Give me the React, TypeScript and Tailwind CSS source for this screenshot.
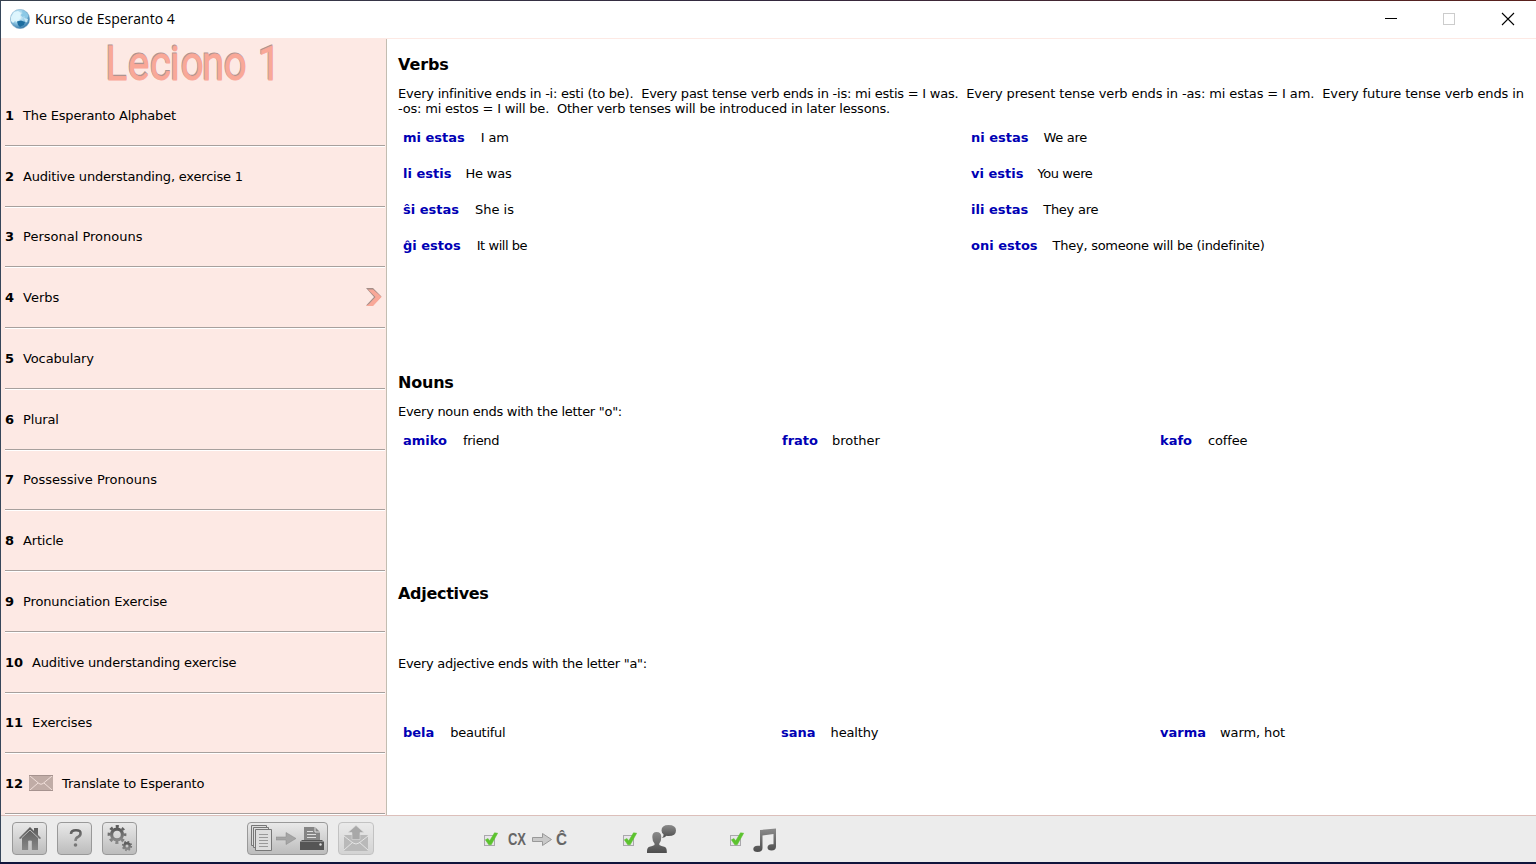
import React from "react";

type Lesson = { n: number; label: string; h: string; track?: string; active?: boolean; mail?: boolean };

const lessons: Lesson[] = [
  { n: 1, label: "The Esperanto Alphabet", h: "h-[61px]", track: "tracking-[-0.17px]" },
  { n: 2, label: "Auditive understanding, exercise 1", h: "h-[61px]", track: "tracking-[-0.19px]" },
  { n: 3, label: "Personal Pronouns", h: "h-[60px]" },
  { n: 4, label: "Verbs", h: "h-[61px]", active: true },
  { n: 5, label: "Vocabulary", h: "h-[61px]", track: "tracking-[-0.13px]" },
  { n: 6, label: "Plural", h: "h-[61px]", track: "tracking-[-0.15px]" },
  { n: 7, label: "Possessive Pronouns", h: "h-[60px]" },
  { n: 8, label: "Article", h: "h-[61px]", track: "tracking-[-0.2px]" },
  { n: 9, label: "Pronunciation Exercise", h: "h-[61px]", track: "tracking-[-0.14px]" },
  { n: 10, label: "Auditive understanding exercise", h: "h-[61px]", track: "tracking-[-0.18px]" },
  { n: 11, label: "Exercises", h: "h-[60px]", track: "tracking-[-0.1px]" },
  { n: 12, label: "Translate to Esperanto", h: "h-[61px]", track: "tracking-[-0.18px]", mail: true },
];

type Pair = [string, string, string?, string?];

const verbs: Pair[] = [
  ["mi estas", "I am", "gap-[16px]", "tracking-[-0.2px]"],
  ["ni estas", "We are", "gap-[15px]", "tracking-[-0.3px]"],
  ["li estis", "He was", "gap-[14px]", "tracking-[-0.2px]"],
  ["vi estis", "You were", "gap-[14px]", "tracking-[-0.4px]"],
  ["ŝi estas", "She is", "gap-[16px]"],
  ["ili estas", "They are", "gap-[15px]", "tracking-[-0.25px]"],
  ["ĝi estos", "It will be", "gap-[16px]", "tracking-[-0.45px]"],
  ["oni estos", "They, someone will be (indefinite)", "gap-[15px]", "tracking-[-0.27px]"],
];
const nouns: Pair[] = [
  ["amiko", "friend", "gap-[16px]", "tracking-[-0.3px]"],
  ["frato", "brother", "gap-[14px]"],
  ["kafo", "coffee", "gap-[16px]", "tracking-[-0.15px]"],
];
const adjectives: Pair[] = [
  ["bela", "beautiful", "gap-[16px]", "tracking-[-0.3px]"],
  ["sana", "healthy", "gap-[15px]", "tracking-[-0.15px]"],
  ["varma", "warm, hot", "gap-[14px]", "tracking-[-0.1px]"],
];

function Word({ pair }: { pair: Pair }) {
  return (
    <div className={`flex whitespace-nowrap ${pair[2] ?? ""}`}>
      <b className="text-[#0000b4]">{pair[0]}</b>
      <span className={pair[3]}>{pair[1]}</span>
    </div>
  );
}

function Globe() {
  return (
    <svg width="20" height="20" viewBox="0 0 20 20" className="ml-[9px]">
      <defs>
        <radialGradient id="globe" cx=".4" cy=".35" r=".7">
          <stop offset="0" stopColor="#f2fbff" /><stop offset=".5" stopColor="#9bd0ea" /><stop offset="1" stopColor="#256a9e" />
        </radialGradient>
      </defs>
      <circle cx="10" cy="10" r="9.700" fill="url(#globe)" stroke="#86afc8" strokeWidth=".5" />
      <path d="M1 8 4 3l4-1 3 2-1 3 1 2-4 4-2-1-2 2-2-2z" fill="#def5fd" opacity=".95" />
      <path d="M12 1.500q5 1 6.500 5.500l-2 3-2-3-2 1-2-2 2-1.500z" fill="#8cc9e6" />
      <path d="M7 12.500l4-1 4 1.500-1 3-4 2-2-2z" fill="#1d6d9f" />
      <path d="M14 9l4 1-1 3.500-2-1z" fill="#c8e9f6" />
    </svg>
  );
}

function Check() {
  return (
    <svg width="16" height="15" viewBox="0 0 16 15">
      <rect x="1.500" y="3.500" width="10" height="10" fill="#e8e5ea" stroke="#aaa8ac" />
      <path d="M2.300 7.800 5 6.500 6.700 8.800 11.500 .8l3.200 .4L8.200 12.800H5.800z" fill="#5cc32f" stroke="#5cc32f" strokeWidth=".5" />
    </svg>
  );
}

function Gear() {
  return (
    <svg width="26" height="28" viewBox="0 0 26 28">
      <g fill="none" stroke="url(#ink)">
        <circle cx="10" cy="10.500" r="5.400" strokeWidth="3.200" />
        <circle cx="10" cy="10.500" r="8" strokeWidth="2.800" strokeDasharray="3.100 3.180" strokeDashoffset="1.500" />
        <circle cx="20" cy="22" r="2.700" strokeWidth="2.400" />
        <circle cx="20" cy="22" r="4.300" strokeWidth="1.700" strokeDasharray="1.700 1.677" />
      </g>
    </svg>
  );
}

const buttonClass = "-mt-[2px] flex h-[33px] items-center justify-center rounded-[4px] border border-[#999] bg-linear-to-b from-[#e9e9e9] to-[#bcbcbc]";

const titleScale = 0.84;
const titleStops = [104, 126.4, 148.4, 168.5, 179.3, 200.4, 222.3, 245, 256.5];
const titleX = (shift: number) => titleStops.map((x) => (x + shift) / titleScale).join(" ");

export default function App() {
  return (
    <div className="flex h-[864px] w-[1536px] flex-col overflow-hidden bg-white font-['DejaVu_Sans',sans-serif] text-[13px] leading-[15px] text-black">
      <svg width="0" height="0" className="absolute">
        <defs>
          <linearGradient id="ink" x1="0" y1="0" x2="0" y2="1"><stop stopColor="#5b5b5b" /><stop offset="1" stopColor="#888" /></linearGradient>
          <linearGradient id="inkLight" x1="0" y1="0" x2="0" y2="1"><stop stopColor="#8b8b8b" /><stop offset="1" stopColor="#4d4d4d" /></linearGradient>
        </defs>
      </svg>
      <div className="h-px shrink-0 bg-linear-to-r from-[#38414e] via-[#33283e] to-[#5a201c]" />
      <div className="flex min-h-0 flex-1 flex-col border-l border-[#36465a]">
        <header className="flex h-[38px] shrink-0 items-center border-b border-[#fde9e4] pb-px">
          <Globe />
          <span className="ml-[5px] font-['Open_Sans',sans-serif] text-[14px] leading-[20px] whitespace-nowrap">Kurso de Esperanto 4</span>
          <svg className="ml-auto" width="152" height="20" viewBox="0 0 152 20" fill="none">
            <path d="M1 9.500h12" stroke="#000" />
            <rect x="59.500" y="4.500" width="11" height="11" stroke="#ccc" />
            <path d="m118 4 12 12m0-12-12 12" stroke="#000" strokeWidth="1.100" />
          </svg>
        </header>

        <div className="flex h-[776px] shrink-0">
          <aside className="flex w-[386px] shrink-0 flex-col border-r border-[#c3bdb1] bg-[#fde9e4]">
            <div className="h-[47px] shrink-0">
              <svg className="overflow-visible" width="384" height="47" viewBox="0 0 384 47">
                <g transform="translate(0 40) scale(.84 1)" fontFamily="Roboto,'Liberation Sans',sans-serif" fontSize="48">
                  <text x={titleX(0)} y="-.5" fill="#ae9390" stroke="#ae9390" strokeWidth="1.200">Leciono 1</text>
                  <text x={titleX(0.5)} y=".5" fill="#f9a898" stroke="#f9a898" strokeWidth=".8">Leciono 1</text>
                </g>
              </svg>
            </div>
            {lessons.map((l) => (
              <div key={l.n} className={`${l.h} mr-px ml-[4px] flex shrink-0 flex-col`}>
                <div className={`flex flex-1 items-center whitespace-nowrap ${l.h === "h-[60px]" ? "pb-px" : ""}`}>
                  <b>{l.n}</b>
                  {l.mail && (
                    <svg className="-mt-[2px] ml-[6px]" width="24" height="16" viewBox="0 0 24 16">
                      <rect width="24" height="16" rx="1" fill="#c0aca6" />
                      <path d="M1 1l9 7.500q2 1.600 4 0L23 1M1 15l8-7m14 7-8-7" fill="none" stroke="#f1dfda" />
                      <path d="M0 .5h24M0 15.500h24" stroke="#a6938f" />
                    </svg>
                  )}
                  <span className={`ml-[9px] ${l.track ?? ""}`}>{l.label}</span>
                  {l.active && (
                    <svg className="-mt-[2px] mr-[3px] ml-auto" width="16" height="18" viewBox="0 0 16 18">
                      <path d="M0 0h7l8.500 8.500L7 17.500H0L8 9z" fill="#a58e88" />
                      <path d="M2 1.500h5l8.500 7.500L7 18H0l3-2 6.500-7z" fill="#f9a898" />
                    </svg>
                  )}
                </div>
                <div className="h-px bg-[#a7a09d]" />
                <div className="h-px bg-white" />
              </div>
            ))}
          </aside>

          <main className="flex min-w-0 flex-1 flex-col pl-[11px]">
            <h1 className="mt-[16px] text-[16px] leading-[20px] font-bold tracking-[-0.1px]">Verbs</h1>
            <p className="mt-[11px] whitespace-pre">
              <span className="tracking-[-0.23px]">{"Every infinitive ends in -i: esti (to be).  Every past tense verb ends in -is: mi estis = I was.  "}</span>
              <span className="tracking-[-0.12px]">{"Every present tense verb ends in -as: mi estas = I am.  Every future tense verb ends in\n"}</span>
              <span className="tracking-[-0.2px]">{"-os: mi estos = I will be.  Other verb tenses will be introduced in later lessons."}</span>
            </p>
            <div className="mt-[14px] ml-[5px] grid grid-cols-[568px_1fr] gap-y-[21px]">
              {verbs.map((v) => <Word key={v[0]} pair={v} />)}
            </div>
            <h2 className="mt-[120px] text-[16px] leading-[20px] font-bold tracking-[-0.2px]">Nouns</h2>
            <p className="mt-[11px] tracking-[-0.28px]">Every noun ends with the letter "o":</p>
            <div className="mt-[14px] ml-[5px] grid grid-cols-[379px_378px_1fr]">
              {nouns.map((v) => <Word key={v[0]} pair={v} />)}
            </div>
            <h2 className="mt-[136px] text-[16px] leading-[20px] font-bold tracking-[-0.3px]">Adjectives</h2>
            <p className="mt-[52px] tracking-[-0.29px]">Every adjective ends with the letter "a":</p>
            <div className="mt-[54px] ml-[5px] grid grid-cols-[378px_379px_1fr]">
              {adjectives.map((v) => <Word key={v[0]} pair={v} />)}
            </div>
          </main>
        </div>

        <footer className="flex h-[47px] shrink-0 items-center border-t border-[#dcbfba] bg-[#ececec] pl-[11px]">
          <div className={`${buttonClass} w-[35px]`}>
            <svg width="22" height="24" viewBox="0 0 22 24">
              <path d="M0 12 11 1l4 4V2h4v7l3 3-1 1-2-1v12h-6v-9H9v9H3V12l-2 1z" fill="url(#ink)" />
              <path d="M2.500 12 11 4l8.500 8M9.500 24v-9h3v9" fill="none" stroke="#bbb" />
            </svg>
          </div>
          <div className={`${buttonClass} ml-[10px] w-[35px]`}>
            <svg className="-mt-px ml-[2px]" width="16" height="20" viewBox="0 0 16 20" fill="none">
              <path d="M3 6q0-3.800 5-3.800t4.500 3.600q0 2-2.500 3.200-2.500 1-2.500 4" stroke="url(#ink)" strokeWidth="2.600" /><circle cx="7.500" cy="17" r="1.800" fill="#777" />
            </svg>
          </div>
          <div className={`${buttonClass} ml-[10px] w-[35px]`}><Gear /></div>
          <div className={`${buttonClass} ml-[110px] w-[81px] gap-[4px]`}>
            <svg width="21" height="26" viewBox="0 0 21 26" fill="#ddd" stroke="#777">
              <path d="M.5.5h15v20H.5z" /><path d="M2.500 2.500h15v20h-15z" /><path d="M4.500 4.500h16v21h-16z" />
              <path d="M8 9.500h9M8 12.500h9M8 15.500h9M8 18.500h9M8 21.500h9" stroke="#999" />
            </svg>
            <svg width="20" height="13" viewBox="0 0 20 13"><path d="M0 5h10V.5L20 6.500 10 12.500V8H0z" fill="#a5a5a5" stroke="#888" strokeWidth=".5" /></svg>
            <svg width="24" height="23" viewBox="0 0 24 23">
              <path d="M4 0h11l5 5v9H4z" fill="#858585" /><path d="M15 0v5h5M7 4.500h6M7 7.500h9M7 10.500h9" fill="none" stroke="#ddd" />
              <path d="M2 13h20l2 2v8H0v-8z" fill="#555" /><path d="M1 14.500h22" stroke="#888" /><circle cx="20.500" cy="17.500" r="1.200" fill="#ddd" />
            </svg>
          </div>
          <div className={`${buttonClass} ml-[10px] w-[36px] opacity-50`}>
            <svg width="24" height="27" viewBox="0 0 24 27">
              <rect y="10" width="24" height="16" rx="1" fill="#888" />
              <path d="m0 25 9-8m15 8-9-8M0 11l9 7q3 2 6 0l9-7" fill="none" stroke="#ddd" />
              <path d="m12 .5 8 7h-4v7H8v-7H4z" fill="#666" stroke="#ccc" strokeWidth=".6" />
            </svg>
          </div>
          <div className="ml-[109px] flex items-center">
            <Check />
            <svg className="ml-[9px] overflow-visible" width="19" height="20" viewBox="0 0 19 20"><text x="0" y="15.500" textLength="18" lengthAdjust="spacingAndGlyphs" fontFamily="'Liberation Sans',sans-serif" fontSize="16" fontWeight="bold" fill="#666">CX</text></svg>
            <svg className="ml-[5px]" width="20" height="13" viewBox="0 0 20 13"><path d="M.5 4.500h10v-4l9 6-9 6v-4H.5z" fill="#c9c9c9" stroke="#999" /></svg>
            <svg className="ml-[4px] overflow-visible" width="12" height="22" viewBox="0 0 12 22"><text x="0" y="17" textLength="11" lengthAdjust="spacingAndGlyphs" fontFamily="'Liberation Sans',sans-serif" fontSize="16" fontWeight="bold" fill="#666">Ĉ</text></svg>
          </div>
          <div className="ml-[54px] flex items-center">
            <Check />
            <svg className="ml-[8px]" width="31" height="30" viewBox="0 0 31 30" fill="url(#inkLight)">
              <path d="M10.500 8q4.800 0 4.800 5 0 4-2 6.500v1.500q2 1 5 1.800 2.500.8 2.500 4.700v1.500H1V27q0-3.500 2.500-4.200 3-.8 5-1.800v-1.500Q6.300 17 6.300 13q0-5 4.200-5z" />
              <path d="M22.500 1q7.500 0 7.500 5.500t-7.500 5.500q-1 0-2-.3-2 2.300-4.500 2 2-1.200 1.500-3.400-2-1.500-2-3.800 0-5.500 7-5.500z" />
            </svg>
          </div>
          <div className="ml-[52px] flex items-center">
            <Check />
            <svg className="mt-[3px] ml-[8px]" width="24" height="27" viewBox="0 0 24 27" fill="url(#inkLight)">
              <path d="M7 3 23 1.500v18q0 4-4.500 4-4 0-4-3t4-3.200h2V7L9.500 8.500V21q0 4-5 4-4.200 0-4.200-3t4.200-3.300H7z" />
            </svg>
          </div>
        </footer>
      </div>
      <div className="h-[2px] shrink-0 bg-[#10143c]" />
    </div>
  );
}
